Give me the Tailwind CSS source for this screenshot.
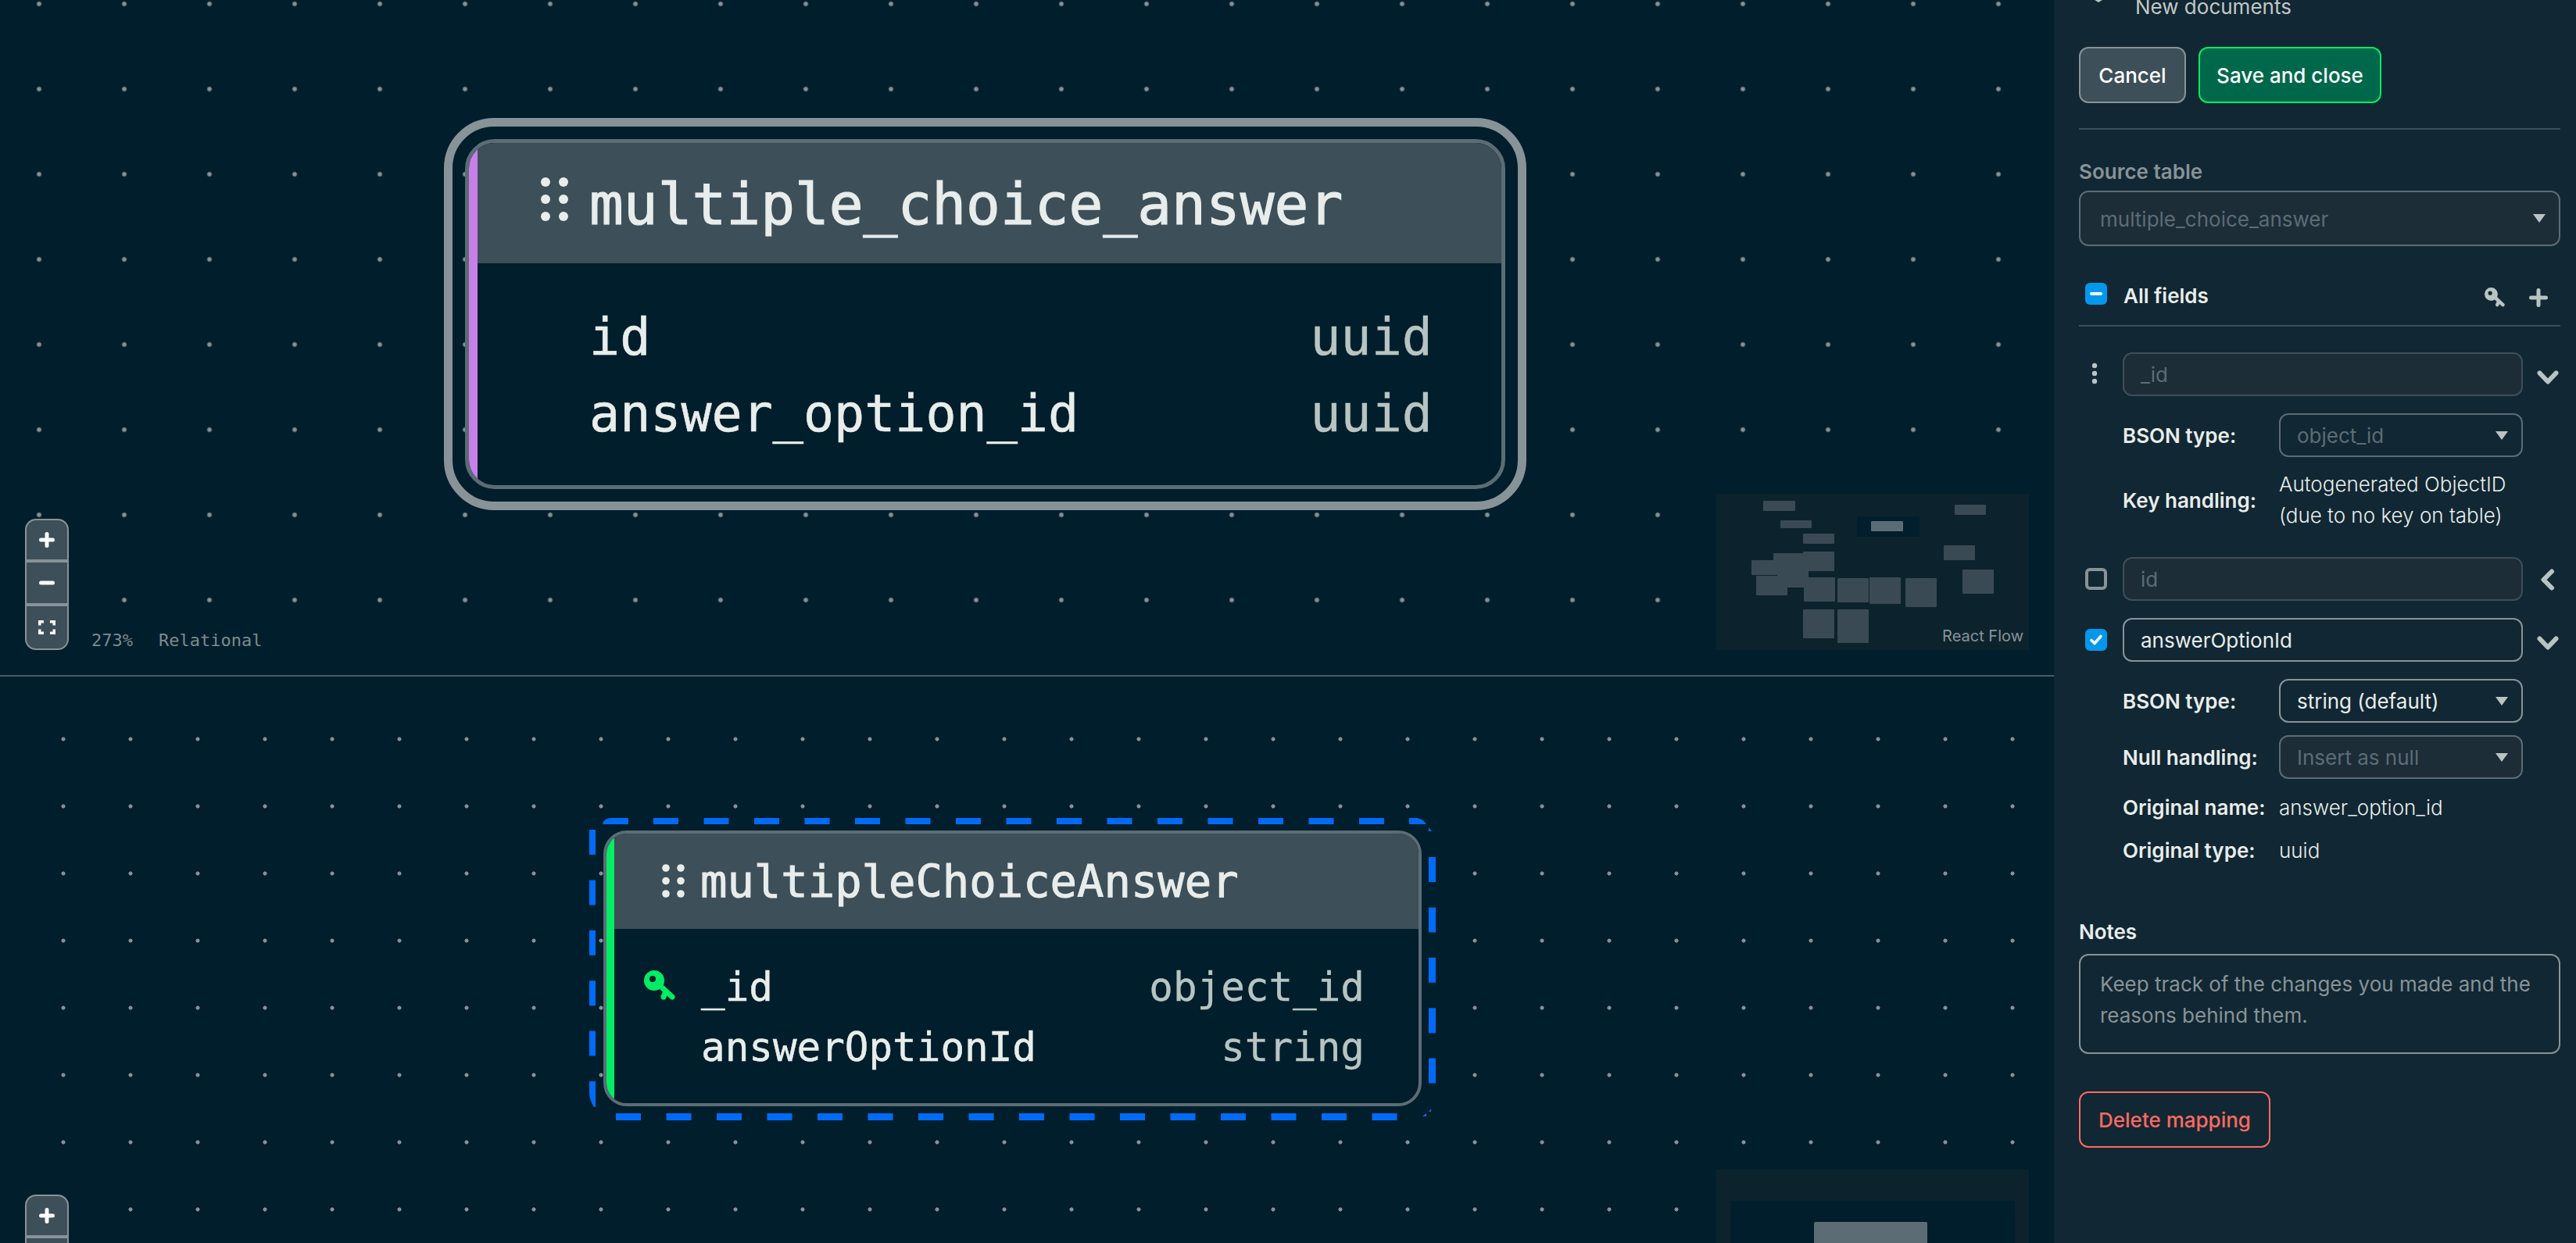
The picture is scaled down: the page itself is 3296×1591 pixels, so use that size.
<!DOCTYPE html>
<html lang="en">
<head>
    <meta charset="UTF-8">
    <title>Relational Migrator mapping</title>
    <script src="https://cdn.jsdelivr.net/npm/@tailwindcss/browser@4"></script>
</head>
<body class="bg-[#001E2B] overflow-hidden font-['Inter',sans-serif]">
<div class="flex w-[3296px] h-[1591px] overflow-hidden">

    <!-- canvases -->
    <div class="w-[2628px] flex flex-col">
        <!-- relational canvas -->
        <div class="relative h-[864px] overflow-hidden [background-image:radial-gradient(circle,#8a8e96_2.6px,transparent_3.3px)] [background-size:109px_109px] [background-position:-4.5px_-49.5px]">
            <div class="absolute left-[568px] top-[151px] w-[1385px] h-[502px] rounded-[64px] border-[11px] border-[#889397] p-[16px]">
                <div class="relative w-full h-full flex flex-col overflow-hidden rounded-[38px] border-[5.5px] border-[#5C6C75] bg-[#001E2B] font-['DejaVu_Sans_Mono',monospace]">
                    <div class="absolute left-0 top-0 bottom-0 w-[11px] bg-[#C97FEA]"></div>
                    <div class="h-[153.5px] bg-[#3D4F58] flex items-center pl-[92px] pt-[4px] gap-[26px] text-[72.8px] text-[#E8EDEB] [-webkit-text-stroke:1.2px_#E8EDEB]">
                        <svg class="w-[36px] h-[56px] mt-[-14px]" viewBox="0 0 36 56" fill="#E8EDEB"><circle cx="6" cy="6" r="6"/><circle cx="29" cy="6" r="6"/><circle cx="6" cy="28" r="6"/><circle cx="29" cy="28" r="6"/><circle cx="6" cy="50" r="6"/><circle cx="29" cy="50" r="6"/></svg>
                        <span>multiple_choice_answer</span>
                    </div>
                    <div class="flex-1 pt-[46px] pl-[154px] pr-[88px] text-[65px]">
                        <div class="h-[98px] flex items-center justify-between"><span class="text-[#E8EDEB] [-webkit-text-stroke:0.6px_#E8EDEB]">id</span><span class="text-[#B8C4C2] [-webkit-text-stroke:0.4px_#B8C4C2]">uuid</span></div>
                        <div class="h-[98px] flex items-center justify-between"><span class="text-[#E8EDEB] [-webkit-text-stroke:0.6px_#E8EDEB]">answer_option_id</span><span class="text-[#B8C4C2] [-webkit-text-stroke:0.4px_#B8C4C2]">uuid</span></div>
                    </div>
                </div>
            </div>

            <!-- zoom controls -->
            <div class="absolute left-[32px] top-[664px] w-[56px] h-[168px] flex flex-col rounded-[14px] border-2 border-[#889397] bg-[#3D4F58] overflow-hidden">
                <div class="h-[54px] flex items-center justify-center border-b-[4px] border-[#889397]">
                    <svg class="w-[20px] h-[20px]" viewBox="0 0 20 20" stroke="#F9FBFA" stroke-width="5" stroke-linecap="round"><path d="M10 2.5V17.5M2.5 10H17.5"/></svg>
                </div>
                <div class="h-[56px] flex items-center justify-center border-b-[4px] border-[#889397]">
                    <svg class="w-[20px] h-[20px]" viewBox="0 0 20 20" stroke="#F9FBFA" stroke-width="5" stroke-linecap="round"><path d="M2.5 10H17.5"/></svg>
                </div>
                <div class="flex-1 flex items-center justify-center">
                    <svg class="w-[22px] h-[18px]" viewBox="0 0 22 18" fill="none" stroke="#F9FBFA" stroke-width="3.5"><path d="M1.75 6.5V1.75H7M15 1.75H20.25V6.5M20.25 11.5V16.25H15M7 16.25H1.75V11.5"/></svg>
                </div>
            </div>
            <div class="absolute left-[117px] top-[805px] flex gap-[33px] text-[22px] leading-[30px] text-[#7C8A8F] font-['DejaVu_Sans_Mono',monospace]">
                <span>273%</span><span>Relational</span>
            </div>

            <!-- minimap -->
            <div class="absolute left-[2196px] top-[632px] w-[400px] h-[200px] bg-[#0C232E]">
                <svg class="w-[400px] h-[200px]" viewBox="0 0 400 200">
                    <rect x="180" y="29" width="80" height="26" fill="#001E2B"/>
                    <g fill="#3A4A54">
                        <rect x="60" y="9" width="41" height="13" rx="1"/>
                        <rect x="82" y="34" width="40" height="10" rx="1"/>
                        <rect x="111" y="51" width="40" height="13" rx="1"/>
                        <rect x="73" y="76" width="40" height="19" rx="1"/>
                        <rect x="111" y="74" width="40" height="25" rx="1"/>
                        <rect x="45" y="85" width="40" height="19" rx="1"/>
                        <rect x="78" y="95" width="40" height="25" rx="1"/>
                        <rect x="51" y="105" width="40" height="25" rx="1"/>
                        <rect x="112" y="107" width="40" height="31" rx="1"/>
                        <rect x="155" y="108" width="40" height="31" rx="1"/>
                        <rect x="196" y="107" width="40" height="34" rx="1"/>
                        <rect x="242" y="108" width="40" height="37" rx="1"/>
                        <rect x="111" y="148" width="40" height="37" rx="1"/>
                        <rect x="155" y="148" width="40" height="43" rx="1"/>
                        <rect x="291" y="66" width="40" height="19" rx="1"/>
                        <rect x="315" y="97" width="40" height="31" rx="1"/>
                        <rect x="305" y="14" width="40" height="13" rx="1"/>
                    </g>
                    <rect x="198" y="35" width="41" height="13" rx="1" fill="#5C6C75"/>
                </svg>
                <span class="absolute right-[7px] bottom-[6px] text-[20px] leading-[24px] text-[#889397]">React Flow</span>
            </div>
        </div>

        <div class="h-[2px] bg-[#4A5B63]"></div>

        <!-- mongodb canvas -->
        <div class="relative flex-1 overflow-hidden [background-image:radial-gradient(circle,#8a8e96_2.2px,transparent_2.9px)] [background-size:86px_86px] [background-position:38px_37px]">
            <!-- selection outline, coords are page coords -->
            <svg class="absolute left-[750px] top-[177px]" width="1090" height="395" viewBox="750 1043 1090 395" fill="none">
                <g stroke="#016BF8">
                    <path d="M836 1051H1772" stroke-width="8" stroke-dasharray="32 32.5"/>
                    <path d="M788 1429.5H1788" stroke-width="9" stroke-dasharray="32 32.5"/>
                    <path d="M758 1062V1353" stroke-width="8" stroke-dasharray="32 32.4"/>
                    <path d="M1832.5 1097V1388" stroke-width="9" stroke-dasharray="32 32.4"/>
                </g>
                <g fill="#016BF8">
                    <path d="M771 1055Q773 1047 782 1047H804V1055Z"/>
                    <path d="M1803 1047H1813Q1821 1048 1825 1055H1803Z"/>
                    <path d="M754 1384H762V1417H760Q754 1408 754 1398Z"/>
                    <path d="M1828 1059 1832 1064H1828Z"/>
                    <path d="M1820 1429 1825 1425V1429Z"/>
                    <path d="M1828 1423 1831 1419V1423Z"/>
                </g>
            </svg>
            <div class="absolute left-[772px] top-[197px] w-[1047px] h-[353px] flex flex-col overflow-hidden rounded-[30px] border-[4px] border-[#5C6C75] bg-[#001E2B] font-['DejaVu_Sans_Mono',monospace]">
                <div class="absolute left-0 top-0 bottom-0 w-[10px] bg-[#00ED64]"></div>
                <div class="h-[122px] bg-[#3D4F58] flex items-center pl-[71px] pt-[2px] gap-[19px] text-[57.2px] text-[#E8EDEB] [-webkit-text-stroke:1px_#E8EDEB]">
                    <svg class="w-[30px] h-[43px] mt-[-4px]" viewBox="0 0 30 43" fill="#E8EDEB"><circle cx="5" cy="5" r="4.8"/><circle cx="24" cy="5" r="4.8"/><circle cx="5" cy="21.5" r="4.8"/><circle cx="24" cy="21.5" r="4.8"/><circle cx="5" cy="38" r="4.8"/><circle cx="24" cy="38" r="4.8"/></svg>
                    <span>multipleChoiceAnswer</span>
                </div>
                <div class="relative flex-1 pt-[37px] pl-[121px] pr-[69px] text-[50.9px]">
                    <svg class="absolute left-[48px] top-[53px] w-[40px] h-[40px]" viewBox="0 0 40 40" fill="none" stroke="#00ED64" stroke-width="7" stroke-linecap="round">
                        <path fill="#00ED64" stroke="none" fill-rule="evenodd" d="M13 0a13 13 0 1 0 0 26 13 13 0 0 0 0-26ZM11 7a4 4 0 1 1 0 8 4 4 0 0 1 0-8Z"/>
                        <path d="M21 20 36 34M28 27 25 34"/>
                    </svg>
                    <div class="h-[77px] flex items-center justify-between"><span class="text-[#E8EDEB] [-webkit-text-stroke:0.5px_#E8EDEB]">_id</span><span class="text-[#B8C4C2] [-webkit-text-stroke:0.3px_#B8C4C2]">object_id</span></div>
                    <div class="h-[77px] flex items-center justify-between"><span class="text-[#E8EDEB] [-webkit-text-stroke:0.5px_#E8EDEB]">answerOptionId</span><span class="text-[#B8C4C2] [-webkit-text-stroke:0.3px_#B8C4C2]">string</span></div>
                </div>
            </div>

            <div class="absolute left-[32px] top-[663px] w-[56px] h-[168px] flex flex-col rounded-[14px] border-2 border-[#889397] bg-[#3D4F58] overflow-hidden">
                <div class="h-[54px] flex items-center justify-center border-b-[4px] border-[#889397]">
                    <svg class="w-[20px] h-[20px]" viewBox="0 0 20 20" stroke="#F9FBFA" stroke-width="5" stroke-linecap="round"><path d="M10 2.5V17.5M2.5 10H17.5"/></svg>
                </div>
            </div>

            <div class="absolute left-[2196px] top-[631px] w-[400px] h-[200px] bg-[#0C232E]">
                <div class="absolute left-[18px] top-[40px] w-[364px] h-[160px] bg-[#001E2B]"></div>
                <div class="absolute left-[125px] top-[67px] w-[145px] h-[100px] rounded-[2px] bg-[#5C6C75]"></div>
            </div>
        </div>
    </div>

    <!-- mapping panel -->
    <div class="relative w-[668px] h-[1591px] bg-[#112733] pl-[32px] pr-[20px] text-[26px] text-[#E8EDEB]">
        <svg class="absolute left-[52px] top-0 w-[10px] h-[3px]" viewBox="0 0 10 3" fill="#B8C4C2"><path d="M0 0H10L5 3Z"/></svg>
        <div class="h-[18px] leading-[18px] pl-[72px] text-[#C1C7C6]">New documents</div>

        <div class="mt-[42px] flex gap-[16px] font-medium">
            <div class="w-[137px] h-[72px] flex items-center justify-center rounded-[12px] border-2 border-[#889397] bg-[#3D4F58] text-white">Cancel</div>
            <div class="w-[234px] h-[72px] flex items-center justify-center rounded-[12px] border-2 border-[#00ED64] bg-[#00684A] text-white">Save and close</div>
        </div>
        <div class="mt-[32px] h-[2px] bg-[#3D4F58]"></div>

        <div class="mt-[36px] h-[36px] leading-[36px] font-semibold text-[#889397]">Source table</div>
        <div class="mt-[6px] h-[71px] flex items-center justify-between pl-[25px] pr-[17px] rounded-[12px] border-2 border-[#5C6C75] bg-[#1C2D38] text-[#5C6C75]">
            <span class="pt-[1px]">multiple_choice_answer</span>
            <svg class="w-[16px] h-[11px]" viewBox="0 0 16 11" fill="#B8C4C2"><path d="M0 0H16L8 11Z"/></svg>
        </div>

        <div class="mt-[43px] h-[40px] flex items-center">
            <div class="ml-[8px] mb-[4px] w-[28px] h-[28px] flex items-center justify-center rounded-[6px] bg-[#0498EC]">
                <svg class="w-[16px] h-[6px]" viewBox="0 0 16 6" stroke="#fff" stroke-width="4" stroke-linecap="round"><path d="M2 3H14"/></svg>
            </div>
            <span class="ml-[21px] font-semibold">All fields</span>
            <svg class="ml-auto mr-[31px] mt-[6px] w-[26px] h-[26px]" viewBox="0 0 40 40" fill="none" stroke="#B8C4C2" stroke-width="7" stroke-linecap="round">
                <path fill="#B8C4C2" stroke="none" fill-rule="evenodd" d="M13 0a13 13 0 1 0 0 26 13 13 0 0 0 0-26ZM11 7a4 4 0 1 1 0 8 4 4 0 0 1 0-8Z"/>
                <path d="M21 20 36 34M28 27 25 34"/>
            </svg>
            <svg class="mr-[16px] mt-[6px] w-[24px] h-[24px]" viewBox="0 0 24 24" stroke="#B8C4C2" stroke-width="5" stroke-linecap="round"><path d="M12 2.5V21.5M2.5 12H21.5"/></svg>
        </div>
        <div class="mt-[18px] h-[2px] bg-[#3D4F58]"></div>

        <!-- _id field -->
        <div class="mt-[33px] flex items-center">
            <div class="w-[56px] pl-[16px]">
                <svg class="w-[8px] h-[28px] mb-[2px]" viewBox="0 0 8 28" fill="#B8C4C2"><circle cx="4" cy="4" r="3.2"/><circle cx="4" cy="14" r="3.2"/><circle cx="4" cy="24" r="3.2"/></svg>
            </div>
            <div class="w-[512px] h-[56px] flex items-center pl-[21px] rounded-[12px] border-2 border-[#3D4F58] bg-[#1C2D38] text-[#5C6C75]">_id</div>
            <svg class="ml-[18px] mt-[8px] w-[28px] h-[20px]" viewBox="0 0 28 20" fill="none" stroke="#B8C4C2" stroke-width="6" stroke-linecap="round" stroke-linejoin="round"><path d="M3.5 4.5 14 15.5 24.5 4.5"/></svg>
        </div>
        <div class="mt-[22px] flex items-center pl-[56px]">
            <span class="w-[200px] font-semibold">BSON type:</span>
            <div class="w-[312px] h-[56px] flex items-center justify-between pl-[21px] pr-[17px] rounded-[12px] border-2 border-[#5C6C75] text-[#5C6C75]">
                <span>object_id</span>
                <svg class="w-[16px] h-[11px]" viewBox="0 0 16 11" fill="#B8C4C2"><path d="M0 0H16L8 11Z"/></svg>
            </div>
        </div>
        <div class="mt-[15px] flex items-center pl-[56px]">
            <span class="w-[200px] font-semibold">Key handling:</span>
            <div class="leading-[40px] font-light">Autogenerated ObjectID<br>(due to no key on table)</div>
        </div>

        <!-- id field -->
        <div class="mt-[33px] flex items-center">
            <div class="w-[56px] pl-[8px]">
                <div class="w-[28px] h-[28px] rounded-[6px] border-[4px] border-[#889397]"></div>
            </div>
            <div class="w-[512px] h-[56px] flex items-center pl-[21px] rounded-[12px] border-2 border-[#3D4F58] bg-[#1C2D38] text-[#5C6C75]">id</div>
            <svg class="ml-[22px] mt-[2px] w-[20px] h-[28px]" viewBox="0 0 20 28" fill="none" stroke="#B8C4C2" stroke-width="6" stroke-linecap="round" stroke-linejoin="round"><path d="M15 3.5 4.5 14 15 24.5"/></svg>
        </div>

        <!-- answerOptionId field -->
        <div class="mt-[22px] flex items-center">
            <div class="w-[56px] pl-[8px]">
                <div class="w-[28px] h-[28px] flex items-center justify-center rounded-[6px] bg-[#0498EC]">
                    <svg class="w-[18px] h-[16px]" viewBox="0 0 18 16" fill="none" stroke="#fff" stroke-width="3.6" stroke-linecap="round" stroke-linejoin="round"><path d="M3 8.5 7 12.5 15 3.5"/></svg>
                </div>
            </div>
            <div class="w-[512px] h-[56px] flex items-center pl-[21px] rounded-[12px] border-2 border-[#889397]">answerOptionId</div>
            <svg class="ml-[18px] mt-[8px] w-[28px] h-[20px]" viewBox="0 0 28 20" fill="none" stroke="#B8C4C2" stroke-width="6" stroke-linecap="round" stroke-linejoin="round"><path d="M3.5 4.5 14 15.5 24.5 4.5"/></svg>
        </div>
        <div class="mt-[22px] flex items-center pl-[56px]">
            <span class="w-[200px] font-semibold">BSON type:</span>
            <div class="w-[312px] h-[56px] flex items-center justify-between pl-[21px] pr-[17px] rounded-[12px] border-2 border-[#889397]">
                <span>string (default)</span>
                <svg class="w-[16px] h-[11px]" viewBox="0 0 16 11" fill="#B8C4C2"><path d="M0 0H16L8 11Z"/></svg>
            </div>
        </div>
        <div class="mt-[16px] flex items-center pl-[56px]">
            <span class="w-[200px] font-semibold">Null handling:</span>
            <div class="w-[312px] h-[56px] flex items-center justify-between pl-[21px] pr-[17px] rounded-[12px] border-2 border-[#5C6C75] bg-[#1C2D38] text-[#5C6C75]">
                <span>Insert as null</span>
                <svg class="w-[16px] h-[11px]" viewBox="0 0 16 11" fill="#B8C4C2"><path d="M0 0H16L8 11Z"/></svg>
            </div>
        </div>
        <div class="mt-[16px] h-[40px] flex items-center pl-[56px]">
            <span class="w-[200px] font-semibold">Original name:</span><span class="font-light">answer_option_id</span>
        </div>
        <div class="mt-[15px] h-[40px] flex items-center pl-[56px]">
            <span class="w-[200px] font-semibold">Original type:</span><span class="font-light">uuid</span>
        </div>

        <div class="mt-[67px] h-[36px] leading-[36px] font-semibold">Notes</div>
        <div class="mt-[10px] h-[128px] pt-[17px] pl-[25px] pr-[20px] leading-[40px] rounded-[12px] border-2 border-[#889397] text-[#889397]">Keep track of the changes you made and the reasons behind them.</div>

        <div class="mt-[48px] w-[245px] h-[72px] flex items-center justify-center rounded-[12px] border-2 border-[#FF6960] font-medium text-[#FF6960]">Delete mapping</div>
    </div>
</div>
</body>
</html>
